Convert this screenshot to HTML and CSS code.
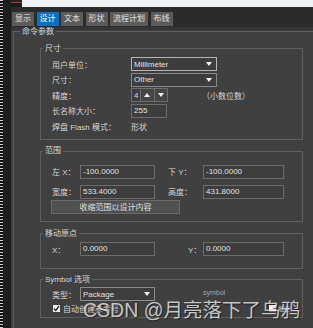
FILE: index.html
```html
<!DOCTYPE html>
<html lang="zh-CN">
<head>
  <meta charset="UTF-8">
  <title>设计参数编辑器</title>
  <link rel="stylesheet" href="styles.css">
</head>
<body>
<div class="window">
  <div class="side"></div>
  <div class="main">
    <div class="titlestrip"><span class="appicon"></span></div>
    <div class="tabs">
      <span class="tab">显示</span>
      <span class="tab active">设计</span>
      <span class="tab">文本</span>
      <span class="tab">形状</span>
      <span class="tab">流程计划</span>
      <span class="tab">布线</span>
    </div>
    <div class="page">
      <fieldset class="group outer">
        <legend>命令参数</legend>

        <fieldset class="group inner size">
          <legend>尺寸</legend>
          <div class="sizeform">
            <span class="label">用户单位：</span>
            <div class="combo focus"><span>Millimeter</span><i class="arrow"></i></div>

            <span class="label">尺寸：</span>
            <div class="combo"><span>Other</span><i class="arrow"></i></div>

            <span class="label">精度：</span>
            <div class="spinrow">
              <div class="spin">
                <span class="num">4</span>
                <span class="sbtn"><i class="up"></i></span>
                <span class="sbtn"><i class="arrow"></i></span>
              </div>
              <span class="note">（小数位数）</span>
            </div>

            <span class="label">长名称大小：</span>
            <div class="field short">255</div>

            <span class="label">焊盘 Flash 模式：</span>
            <span class="value">形状</span>
          </div>
        </fieldset>

        <fieldset class="group inner extents">
          <legend>范围</legend>
          <div class="pairform">
            <span class="label">左 X：</span>
            <div class="field w75">-100.0000</div>
            <span class="label second">下 Y：</span>
            <div class="field w81">-100.0000</div>

            <span class="label">宽度：</span>
            <div class="field w75">533.4000</div>
            <span class="label second">高度：</span>
            <div class="field w81">431.8000</div>
          </div>
          <button class="shrink">收缩范围以设计内容</button>
        </fieldset>

        <fieldset class="group inner origin">
          <legend>移动原点</legend>
          <div class="pairform">
            <span class="label">X：</span>
            <div class="field w75">0.0000</div>
            <span class="label ylabel">Y：</span>
            <div class="field w81">0.0000</div>
          </div>
        </fieldset>

        <fieldset class="group inner symbol">
          <legend>Symbol 选项</legend>
          <div class="pairform">
            <span class="label">类型：</span>
            <div class="combo w75"><span>Package</span><i class="arrow"></i></div>
            <span></span>
            <span class="hint">symbol</span>
          </div>
          <div class="checks">
            <label class="check">
              <span class="box on"><svg width="7" height="7" viewBox="0 0 7 7"><path d="M1 3.6 L2.8 5.4 L6 1.2" fill="none" stroke="#222" stroke-width="1.4"/></svg></span>
              <span>自动创建参考号</span>
            </label>
            <label class="check right">
              <span class="box"></span>
              <span class="tiny">批注</span>
            </label>
          </div>
        </fieldset>
      </fieldset>
    </div>
  </div>
  <div class="watermark">CSDN @月亮落下了乌鸦</div>
</div>
</body>
</html>
```

FILE: styles.css
```css
body {
  margin: 0;
  background: #404040;
  font-family: "Liberation Sans", "Noto Sans CJK SC", sans-serif;
  font-size: 8px;
  color: #d6d6d6;
  overflow: hidden;
}

.window {
  position: relative;
  display: flex;
  height: 328px;
}

.side {
  width: 3px;
  background: repeating-linear-gradient(#cfcfcf 0 1px, #0e0e0e 1px 3px);
  border-right: 8px solid #1e1e1e;
}

.main {
  flex: 1;
  display: flex;
  flex-direction: column;
  min-width: 0;
}

.titlestrip {
  height: 7px;
  background: #eef2f5;
  display: flex;
}
.appicon {
  width: 11px;
  background: linear-gradient(#262626 0 2px, #c4302b 2px 3px, #1b1b1b 3px);
}

.tabs {
  height: 20px;
  box-sizing: border-box;
  padding: 5px 0 0 1px;
  background: #2b2b2b;
  display: flex;
  gap: 2px;
}
.tab {
  height: 14px;
  line-height: 14px;
  padding: 0 3px;
  background: #5b5b5b;
  color: #e4e4e4;
  margin-right: 0.5px;
}
.tab.active {
  background: #0b6fc4;
  color: #fff;
}

.page {
  flex: 1;
  background: linear-gradient(#353535 0 3px, #404040 3px);
  overflow: hidden;
}

.group {
  margin: 0;
  padding: 0;
  border: 1px solid #5e5e5e;
}
.group legend {
  padding: 0 2px;
  line-height: 10px;
  color: #d8d8d8;
}

.outer {
  margin: -0.5px -20px 0 2px;
  height: 400px;
}
.outer > legend {
  margin-left: 6px;
}

.inner {
  margin: 0 0 0 26px;
  width: 263px;
  box-sizing: border-box;
}
.inner > legend {
  margin-left: 2px;
}
.size { margin-top: 7px; }
.extents { margin-top: 6px; }
.origin { margin-top: 6.5px; }
.symbol { margin-top: 5.5px; }

.label, .value {
  white-space: nowrap;
}

.sizeform {
  display: grid;
  grid-template-columns: 79px auto;
  grid-auto-rows: 14px;
  row-gap: 1.5px;
  align-items: center;
  padding: 3.5px 0 6px 11px;
}

.combo {
  width: 86px;
  height: 14px;
  box-sizing: border-box;
  border: 1px solid #8a8a8a;
  background: #3d3d3d;
  display: flex;
  align-items: center;
  justify-content: space-between;
  padding: 0 4px 0 2px;
  color: #e2e2e2;
}
.combo.focus {
  border-color: #b4b4b4;
}
.combo.w75 {
  width: 75px;
}

.arrow, .up {
  width: 0;
  height: 0;
  border-left: 3.5px solid transparent;
  border-right: 3.5px solid transparent;
}
.arrow {
  border-top: 4px solid #f4f4f4;
}
.up {
  border-bottom: 4px solid #f4f4f4;
}

.spinrow {
  display: flex;
  align-items: center;
}
.spin {
  display: flex;
  height: 14px;
}
.spin > span {
  box-sizing: border-box;
  border: 1px solid #6e6e6e;
  display: flex;
  align-items: center;
  justify-content: center;
  background: #3d3d3d;
}
.spin .num {
  width: 10px;
  justify-content: flex-start;
  padding-left: 2px;
}
.spin .sbtn {
  width: 13.5px;
  border-left: none;
  background: #454545;
}
.note {
  margin-left: 34px;
}

.field {
  height: 14px;
  box-sizing: border-box;
  border: 1px solid #6c6c6c;
  background: #3d3d3d;
  padding: 0 2px;
  line-height: 12px;
  color: #e2e2e2;
}
.field.short { width: 36px; }
.field.w75 { width: 75px; }
.field.w81 { width: 81px; }

.pairform {
  display: grid;
  grid-template-columns: 28px 75px 48px 81px;
  grid-auto-rows: 14px;
  row-gap: 6px;
  align-items: center;
  padding-left: 11px;
}
.label.second {
  padding-left: 13px;
}
.label.ylabel {
  padding-left: 33px;
}

.extents .pairform {
  padding-top: 8.5px;
}
.shrink {
  display: block;
  margin: 1px 0 7.5px 10px;
  width: 129px;
  height: 14px;
  padding: 0;
  border: 1px solid #6a6a6a;
  background: #505050;
  font: inherit;
  color: #e0e0e0;
}

.origin .pairform {
  padding: 3.5px 0 12px 11px;
}

.symbol .pairform {
  padding: 2.5px 0 0 11px;
}
.hint {
  font-size: 7px;
  color: #a8a8a8;
  margin-top: -3px;
}

.checks {
  display: flex;
  align-items: center;
  height: 14px;
  padding: 0 0 2px 12px;
}
.check {
  display: flex;
  align-items: center;
  gap: 3px;
}
.check.right {
  margin-left: 150px;
  gap: 2px;
}
.box {
  width: 7px;
  height: 7px;
  background: #f2f2f2;
  display: flex;
}
.tiny {
  font-size: 6px;
}

.watermark {
  position: absolute;
  left: 83px;
  top: 298px;
  font-size: 19.5px;
  line-height: 24px;
  white-space: nowrap;
  color: rgba(232, 232, 232, 0.82);
  text-shadow: 1px 1px 1px rgba(20, 20, 20, 0.7);
}
```
